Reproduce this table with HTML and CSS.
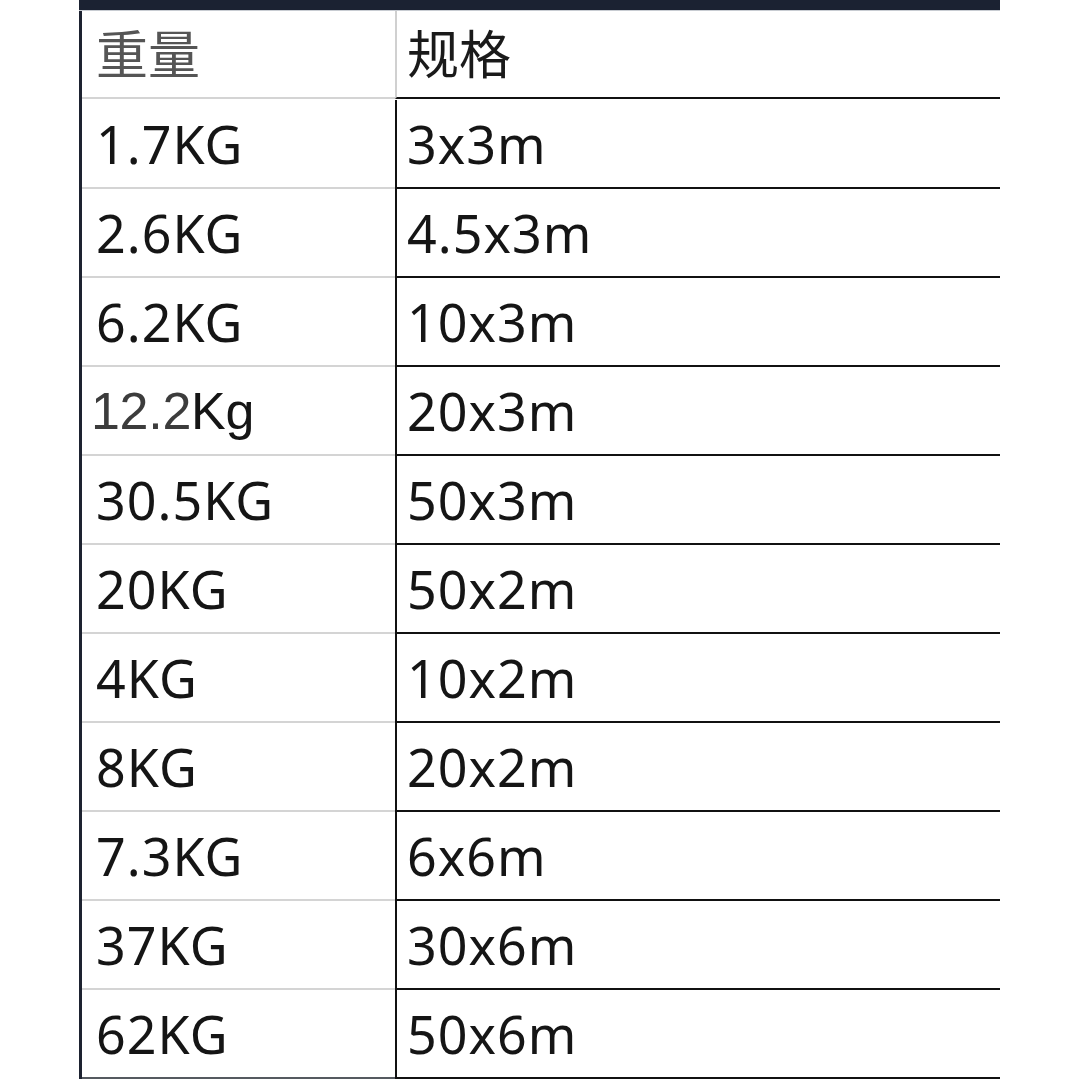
FILE: index.html
```html
<!DOCTYPE html>
<html lang="zh">
<head>
<meta charset="utf-8">
<title>重量 规格</title>
<link rel="stylesheet" href="styles.css">
</head>
<body>
<div class="sheet">
  <div class="topbar"></div>
  <div class="grid">
    <div class="cell w head muted">重量</div>
    <div class="cell s head">规格</div>

    <div class="cell w">1.7KG</div><div class="cell s">3x3m</div>
    <div class="cell w">2.6KG</div><div class="cell s">4.5x3m</div>
    <div class="cell w">6.2KG</div><div class="cell s">10x3m</div>
    <div class="cell w odd"><span class="gray">12.2</span>Kg</div><div class="cell s">20x3m</div>
    <div class="cell w">30.5KG</div><div class="cell s">50x3m</div>
    <div class="cell w">20KG</div><div class="cell s">50x2m</div>
    <div class="cell w">4KG</div><div class="cell s">10x2m</div>
    <div class="cell w">8KG</div><div class="cell s">20x2m</div>
    <div class="cell w">7.3KG</div><div class="cell s">6x6m</div>
    <div class="cell w">37KG</div><div class="cell s">30x6m</div>
    <div class="cell w last">62KG</div><div class="cell s last">50x6m</div>
  </div>
</div>
</body>
</html>
```
FILE: styles.css
```css
html, body {
  margin: 0;
  padding: 0;
  background: #ffffff;
}

.sheet {
  margin-left: 79px;
  width: 921px;
  height: 1080px;
  display: flex;
  flex-direction: column;
}

.topbar {
  height: 10px;
  background: #1b2232;
  border-bottom: 1px solid #c8ccd2;
}

.grid {
  display: grid;
  grid-template-columns: 313px 1fr;
  grid-auto-rows: 89px;
  border-left: 3px solid #1d2230;
}

.grid > .head {
  height: 88px;
}

.cell {
  box-sizing: border-box;
  display: flex;
  align-items: center;
  font-family: "Noto Sans", "Open Sans", "Noto Sans CJK SC", sans-serif;
  font-size: 52px;
  color: #151515;
  white-space: nowrap;
  letter-spacing: 1px;
}

.w {
  padding-left: 14px;
  border-bottom: 2px solid #d4d4d4;
}

.s {
  padding-left: 10px;
  border-left: 2px solid #111111;
  border-bottom: 2px solid #111111;
}

.head {
  font-family: "Noto Sans CJK SC", sans-serif;
  font-size: 52px;
  letter-spacing: 0;
  padding-bottom: 6px;
}

.s.head {
  border-left: 2px solid #d0d0d0;
  color: #1a1a1a;
}

.muted {
  color: #555555;
}

.odd {
  padding-left: 9px;
  font-family: "Liberation Sans", "Noto Sans", sans-serif;
  letter-spacing: -0.3px;
}

.gray {
  color: #3c3c3c;
}

.w.last {
  border-bottom: 2px solid #555a60;
}

.s.last {
  border-bottom: 2px solid #111111;
}
```
